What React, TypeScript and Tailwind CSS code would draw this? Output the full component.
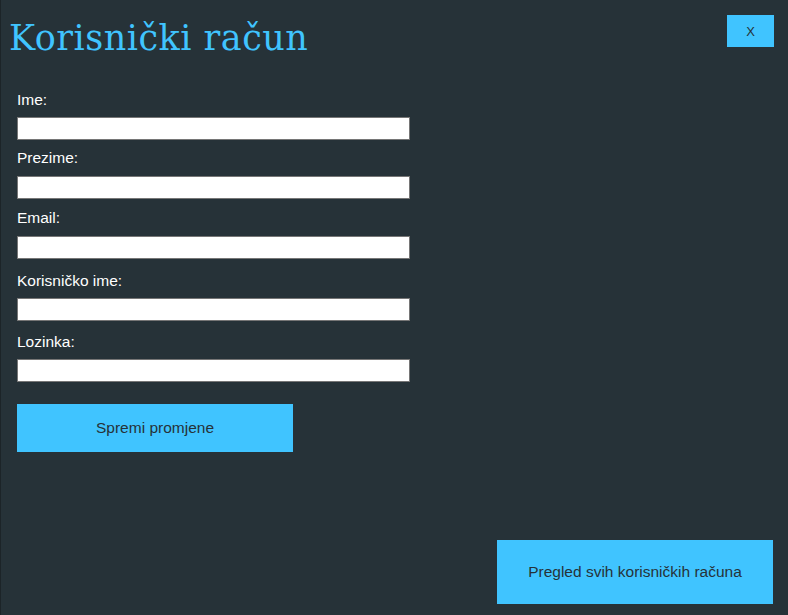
import React from "react";

const fields: { label: string; labelMt: string; inputMt: string; type?: string }[] = [
  { label: "Ime:", labelMt: "mt-[33px]", inputMt: "mt-[8px]" },
  { label: "Prezime:", labelMt: "mt-[9px]", inputMt: "mt-[9px]" },
  { label: "Email:", labelMt: "mt-[10px]", inputMt: "mt-[9px]" },
  { label: "Korisničko ime:", labelMt: "mt-[13px]", inputMt: "mt-[8px]" },
  { label: "Lozinka:", labelMt: "mt-[12px]", inputMt: "mt-[8px]", type: "password" },
];

export default function App() {
  return (
    <div className="w-[788px] h-[615px] bg-[#263238] border-l border-[#1c2428] flex flex-col font-['Liberation_Sans',Arial,sans-serif] overflow-hidden">
      <div className="flex items-start justify-between">
        <h1 className="mt-[18px] ml-[8px] text-[35px] leading-[40px] tracking-[0.5px] text-[#40c4ff] font-['DejaVu_Serif',serif] font-normal">
          Korisnički račun
        </h1>
        <button className="mt-[15px] mr-[14px] w-[47px] h-[32px] bg-[#40c4ff] text-[#263238] text-[13px] leading-none flex items-center justify-center">
          X
        </button>
      </div>
      <div className="flex flex-col pl-[16px]">
        {fields.map((f) => (
          <React.Fragment key={f.label}>
            <label className={`${f.labelMt} text-[15.5px] leading-[18px] text-white`}>{f.label}</label>
            <input
              type={f.type ?? "text"}
              className={`${f.inputMt} w-[393px] h-[23px] bg-white border border-[#767676] outline-none`}
            />
          </React.Fragment>
        ))}
        <button className="mt-[22px] w-[276px] h-[48px] bg-[#40c4ff] text-[#263238] text-[15.5px] leading-[18px] flex items-center justify-center">
          Spremi promjene
        </button>
      </div>
      <div className="mt-auto mb-[11px] mr-[15px] flex justify-end">
        <button className="w-[276px] h-[64px] bg-[#40c4ff] text-[#263238] text-[15.5px] leading-[18px] flex items-center justify-center">
          Pregled svih korisničkih računa
        </button>
      </div>
    </div>
  );
}
